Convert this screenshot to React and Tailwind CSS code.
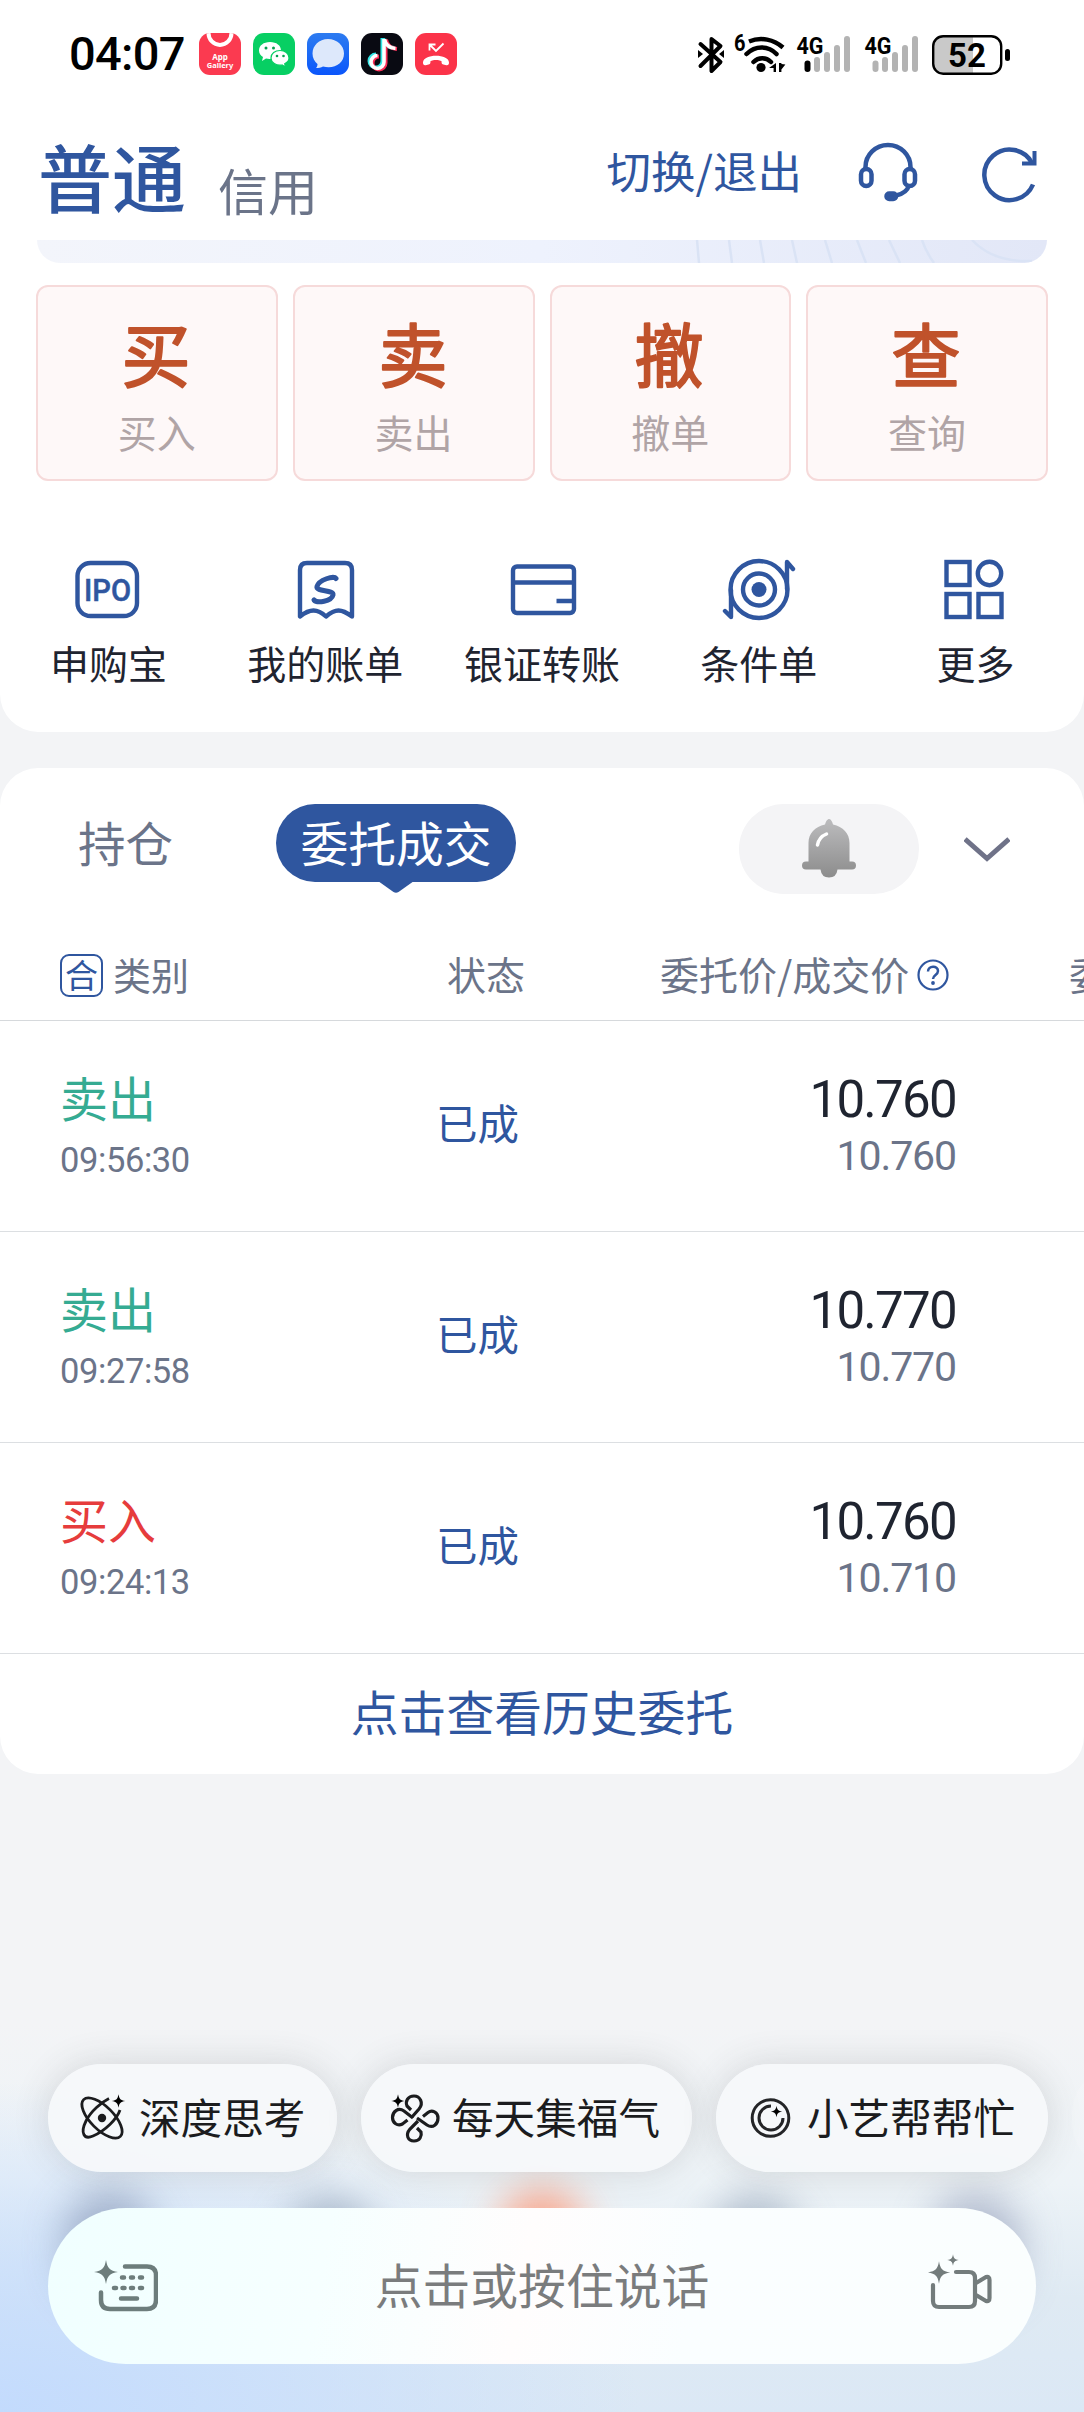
import React from "react";

const BLUE = "#2f569f";

function AppTile({ className, children }) {
  return (
    <div className={"w-[42px] h-[42px] rounded-[11px] overflow-hidden " + className}>
      <svg viewBox="0 0 42 42" className="w-full h-full block">{children}</svg>
    </div>
  );
}

function StatusBar() {
  return (
    <div className="h-[108px] flex items-start justify-between pl-[69px] pr-[73px] pt-[33px]">
      <div className="flex items-start">
        <span className="w-[130px] h-[42px] leading-[42px] text-[47px] font-medium text-black tracking-[-0.7px] font-[Roboto,sans-serif]">04:07</span>
        <div className="flex gap-3">
          <AppTile className="bg-[#fb3a50]">
            <path d="M9.500 0a11.500 12 0 0 0 23 0" fill="none" stroke="#fff" strokeWidth="4" />
            <text x="21" y="26.500" textAnchor="middle" fontSize="8" fontWeight="700" fill="#fff" fontFamily="Noto Sans">App</text>
            <text x="21" y="35" textAnchor="middle" fontSize="7.500" fontWeight="700" fill="#fff" fontFamily="Noto Sans">Gallery</text>
          </AppTile>
          <AppTile className="bg-[#07cf63]">
            <path d="M17 9C10.500 9 6 12.500 6 17.500c0 3 1.500 5 4 6.500l-1 4 4-2.500c6 1.500 15-1 15-8C28 12.500 23.500 9 17 9z" fill="#fff" />
            <path d="M27 17.500c-5 0-9 3-9 7.500s5 8 11 7l3.500 2-.8-3.300c2.500-1.200 4.300-3.200 4.300-5.700 0-4.500-4-7.500-9-7.500z" fill="#fff" stroke="#07cf63" strokeWidth="1.200" />
            <g fill="#07a050"><circle cx="13" cy="15" r="1.500" /><circle cx="20.500" cy="15" r="1.500" /><circle cx="24" cy="23" r="1.300" /><circle cx="30.500" cy="23" r="1.300" /></g>
          </AppTile>
          <AppTile className="bg-linear-to-b from-[#2d7bf0] to-[#0b55fb]">
            <path d="M21 6C12 6 5.500 12.500 5.500 20.500c0 4.500 2 8 5 10.500 0 1.500-.5 3-1.500 4 2.500 0 5-.5 7-1.500 11 3 21-3 21-13C37 12.500 30 6 21 6z" fill="#dde8fb" />
          </AppTile>
          <AppTile className="bg-[#090a12]">
            <g fill="none" strokeWidth="4">
              <path d="M22.500 5.500v23a6.500 6.500 0 1 1-6.500-6.500M23 6c1 6 5 9 11 9.500" stroke="#35e6e6" transform="translate(-1 -.5)" />
              <path d="M23.500 6.500v23a6.500 6.500 0 1 1-6.500-6.500M24 6c1 6 5 9 11 9.500" stroke="#fb2e57" transform="translate(1 .5)" />
              <path d="M23 6v23a6.500 6.500 0 1 1-6.500-6.500M23.500 6c1 6 5 9 11 9.500" stroke="#fff" strokeWidth="3.600" />
            </g>
          </AppTile>
          <AppTile className="bg-[#fb3349]">
            <path d="M14.500 17.500v-6h6M15 12l6 6 7.500-7.500" fill="none" stroke="#fff" strokeWidth="1.800" />
            <path d="M8 29.500c0-9 26-9 26 0 0 2.500-1 3-3.500 2.500-3.500-.5-4-1-4-4-3-1.500-8-1.500-11 0 0 3-.5 3.500-4 4-2.500.5-3.500 0-3.500-2.500z" fill="#fff" />
          </AppTile>
        </div>
      </div>
      <svg viewBox="698 33 314 44" className="w-[314px] h-[44px] overflow-visible" fontFamily="Roboto, sans-serif" fontWeight="700">
        <path d="M701.500 44l20 18-9 9V39l9 7-20 20" fill="none" stroke="#000" strokeWidth="4" strokeLinejoin="round" strokeLinecap="round" />
        <path d="M699 50v8l5-4zM725 50v8l-5-4z" />
        <text x="735" y="51" fontSize="24" textLength="11.500" lengthAdjust="spacingAndGlyphs">6</text>
        <g fill="none" stroke="#000" strokeWidth="4.500">
          <path d="M750 41.500c12-5 25-2 34 6" />
          <path d="M747.500 54c9-9 22-8.500 30 0" strokeLinecap="round" />
          <path d="M754.500 62c5-5 12.500-5 17.500 0" strokeLinecap="round" />
        </g>
        <circle cx="762" cy="67.500" r="4.600" />
        <path d="M777 63v9h-2.400v-4h-4.600zM780 72v-9h2.400v1l4 .5-4 5v2.500z" />
        {[0, 68].map((dx) => (
          <g key={dx} transform={`translate(${dx} 0)`}>
            <text x="797.500" y="54" fontSize="24.500" textLength="27" lengthAdjust="spacingAndGlyphs">4G</text>
            <rect x="805.500" y="60.500" width="6" height="11.500" rx="3" fill={dx ? "#b3b3b3" : "#000"} />
            <g fill="#b3b3b3">
              <rect x="815" y="57" width="6" height="15" rx="3" />
              <rect x="825" y="52" width="6" height="20" rx="3" />
              <rect x="835" y="45" width="6" height="27" rx="3" />
              <rect x="845" y="36" width="6" height="36" rx="3" />
            </g>
          </g>
        ))}
        <path d="M974 37h-30q-10 0-10 10v17q0 10 10 10h30z" fill="#c9c9c9" />
        <rect x="934.200" y="36.200" width="68" height="37.500" rx="10" fill="none" stroke="#000" strokeWidth="2.400" />
        <rect x="1006" y="49" width="5" height="12" rx="2.500" />
        <text x="968" y="67" fontSize="33" textAnchor="middle">52</text>
      </svg>
    </div>
  );
}

function Header() {
  return (
    <div className="h-[132px] flex items-start justify-between pl-[38px] pr-[45px]">
      <div className="flex items-start">
        <span className="w-[180px] text-[74px] leading-[74px] mt-[30px] font-medium text-[#2f569f]">普通</span>
        <span className="text-[50px] leading-[50px] mt-[56px] text-[#6b7489]">信用</span>
      </div>
      <div className="flex items-start">
        <span className="text-[44.500px] leading-[44px] mt-[40px] mr-[56px] text-[#2f569f]">切换/退出</span>
        <svg viewBox="0 0 60 60" className="w-[60px] h-[60px] mt-[34px] mr-[63px]" fill="none" stroke={BLUE} strokeWidth="4.500">
          <path d="M7.500 28v-3a22.500 22 0 0 1 45 0v3" />
          <rect x="3" y="27" width="10.500" height="17" rx="5.250" />
          <rect x="46.500" y="27" width="10.500" height="17" rx="5.250" />
          <path d="M51 43c-1.500 6-6 9-13 10.500" />
          <rect x="28.500" y="51.500" width="9.500" height="5.500" rx="2.750" fill={BLUE} />
        </svg>
        <svg viewBox="0 0 58 58" className="w-[58px] h-[58px] mt-[37px]" fill="none" stroke={BLUE} strokeWidth="4.500">
          <path d="M52 39.500A25.300 25.300 0 1 1 51 18" />
          <path d="M53.500 6v12.500H41" strokeWidth="4" />
        </svg>
      </div>
    </div>
  );
}

function Banner() {
  return (
    <div className="mx-[37px] h-[23px] rounded-b-[28px] overflow-hidden bg-linear-to-r from-[#f3f5fb] via-[#eef2fd] to-[#e2e7f7] flex justify-end">
      <svg viewBox="0 0 400 23" className="w-[400px] h-[23px]" fill="none" stroke="#dae3f5" strokeWidth="2.500">
        <path d="M50 0l2 23M82 0l3 23M113 0l4 23M145 0l5 23M178 0l7 23M210 0l9 23M242 0l11 23M275 0q4 12 12 23M325 0c14 15 35 22 60 21" />
      </svg>
    </div>
  );
}

const trades = [["买", "买入"], ["卖", "卖出"], ["撤", "撤单"], ["查", "查询"]];

function TradeCards() {
  return (
    <div className="mt-[22px] mx-9 grid grid-cols-4 gap-[15px]">
      {trades.map(([big, small]) => (
        <div key={big} className="h-[196px] rounded-xl border-2 border-[#f6dada] bg-[#fef8f8] flex flex-col items-center">
          <svg viewBox="0 0 74 74" className="mt-[33px] w-[74px] h-[74px] overflow-visible">
            <text x="36" y="62" textAnchor="middle" fontSize="69" fill="#c0522b" stroke="#c0522b" strokeWidth="2" strokeLinejoin="round">{big}</text>
          </svg>
          <span className="mt-[18px] text-[39px] leading-[39px] text-[#b0a4a6]">{small}</span>
        </div>
      ))}
    </div>
  );
}

const shortcuts = [
  ["申购宝", (
    <g>
      <rect x="4.500" y="5" width="59.500" height="53" rx="13" />
      <text x="34.500" y="43" textAnchor="middle" fontSize="32" fontWeight="500" fill={BLUE} stroke={BLUE} strokeWidth=".5" fontFamily="Roboto" textLength="47" lengthAdjust="spacingAndGlyphs">IPO</text>
    </g>
  )],
  ["我的账单", (
    <g>
      <path d="M10 58.500V12q0-7 7-7h38q7 0 7 7v46.500q-8-6-13.500-6t-12.500 6q-6.500-6-12.500-6t-13.500 6z" strokeLinejoin="round" />
      <path d="M46 20.500c-2-3-17 1-19 8-1.500 5.500 17 3 16 8.500-1.500 6.500-16 8.500-19 5" strokeWidth="5" strokeLinecap="round" />
    </g>
  )],
  ["银证转账", (
    <g>
      <rect x="6" y="8.500" width="61" height="46.500" rx="4" />
      <path d="M6 24.500h61M49.500 43h17" />
    </g>
  )],
  ["条件单", (
    <g transform="translate(-1 0)">
      <circle cx="36" cy="31.500" r="28.500" /><circle cx="36" cy="31.500" r="16" /><circle cx="36" cy="31.500" r="7.500" fill={BLUE} stroke="none" />
      <path d="M64 31V4l6 7M8 32v27l-6-6" strokeLinecap="round" strokeLinejoin="round" />
    </g>
  )],
  ["更多", (
    <g>
      <rect x="5.500" y="4" width="23" height="23" /><circle cx="48.500" cy="15.500" r="11.700" /><rect x="5.500" y="36" width="23" height="23" /><rect x="37.500" y="36" width="23" height="23" />
    </g>
  )],
];

function Shortcuts() {
  return (
    <div className="mt-[76px] grid grid-cols-5">
      {shortcuts.map(([label, icon]) => (
        <div key={label} className="flex flex-col items-center">
          <svg viewBox="0 0 70 64" className="w-[70px] h-[64px] overflow-visible" fill="none" stroke={BLUE} strokeWidth="4.400"><g transform="translate(0 1)">{icon}</g></svg>
          <span className="mt-[22px] text-[39px] leading-[39px] text-[#1f2430]">{label}</span>
        </div>
      ))}
    </div>
  );
}

function Tabs() {
  return (
    <div className="h-[150px] flex items-start pt-9 pl-[78px]">
      <span className="w-[198px] leading-[76px] text-[47.500px] text-[#6b7489]">持仓</span>
      <div className="relative w-[240px] h-[78px] rounded-full bg-[#2f569f] flex justify-center leading-[76px] text-[47.800px] text-white">
        委托成交
        <svg viewBox="0 0 36 12" className="absolute left-[102px] top-[77px] w-[36px] h-[12px]">
          <path d="M0 0h36L20.500 11q-2.500 1.500-5 0z" fill={BLUE} />
        </svg>
      </div>
      <div className="ml-[223px] w-[180px] h-[90px] rounded-full bg-[#f4f4f6] flex justify-center pt-[15px]">
        <svg viewBox="0 0 54 60" className="w-[54px] h-[60px]">
          <defs><linearGradient id="bell" x1="0" y1="0" x2="0" y2="1"><stop offset="0" stopColor="#bcbcbe" /><stop offset="1" stopColor="#8c8c8c" /></linearGradient></defs>
          <path d="M27 0q2.500 0 4 5.500C41 8 47.500 14 47.500 24v18.500H50a4 4 0 0 1 0 8H35.500q-1 8-8.500 8t-8.500-8H4a4 4 0 0 1 0-8h2.500V24C6.500 14 13 8 23 5.500 24.500 0 27 0 27 0z" fill="url(#bell)" />
          <path d="M15.500 26c1-6 4-9 9-11" fill="none" stroke="#fff" strokeWidth="3.500" strokeLinecap="round" />
        </svg>
      </div>
      <svg viewBox="0 0 46 27" className="ml-[45px] mt-[32px] w-[46px] h-[27px]" fill="none" stroke="#6f7288" strokeWidth="5">
        <path d="M1 3l22 19.500L45 3" />
      </svg>
    </div>
  );
}

function TableHead() {
  return (
    <div className="h-[103px] border-b border-[#d6d9dc] flex items-start pt-[36px] pl-[60px] text-[39px] leading-[39px] text-[#6b7489] whitespace-nowrap overflow-hidden">
      <span className="w-[43px] h-[43px] shrink-0 rounded-[9px] border-2 border-[#2f569f] text-[#2f569f] text-[33px] leading-[37px] flex justify-center">合</span>
      <span className="ml-[10px] w-[334px] shrink-0 text-[38px]">类别</span>
      <span className="w-[213px] shrink-0">状态</span>
      <span className="shrink-0 w-[257px]">委托价/成交价</span>
      <svg viewBox="0 0 32 32" className="w-8 h-8 mt-[5px] shrink-0 mr-[120px]" fill="none" stroke={BLUE} strokeWidth="2.200">
        <circle cx="16" cy="16" r="14.500" />
        <path d="M11 12.500c0-6 10-6.500 10-.5 0 4-5 4-5 8" strokeWidth="2.500" />
        <circle cx="16" cy="24" r="1.900" fill={BLUE} stroke="none" />
      </svg>
      <span className="shrink-0">委托量</span>
    </div>
  );
}

const orders = [
  ["卖出", "09:56:30", "10.760", "10.760", "text-[#35ab92]"],
  ["卖出", "09:27:58", "10.770", "10.770", "text-[#35ab92]"],
  ["买入", "09:24:13", "10.760", "10.710", "text-[#e63c3c]"],
];

function OrderRow({ order }) {
  const [side, time, price, deal, tone] = order;
  return (
    <div className="h-[211px] border-b border-[#dcdfe2] flex items-start pl-[60px] pr-[128px]">
      <div className="w-[376px] flex flex-col pt-[51px]">
        <span className={"text-[48px] leading-[48px] " + tone}>{side}</span>
        <span className="mt-[22px] text-[34.500px] leading-[36px] tracking-[-0.4px] text-[#6b7489] font-[Roboto,sans-serif]">{time}</span>
      </div>
      <span className="mt-[81px] text-[41.500px] leading-[41px] text-[#2f569f]">已成</span>
      <div className="ml-auto flex flex-col items-end pt-[53px] font-[Roboto,sans-serif]">
        <span className="text-[51px] leading-[52px] tracking-[-1.7px] text-[#1f2430]">{price}</span>
        <span className="mt-[9px] text-[41px] leading-[42px] tracking-[-1.100px] text-[#6b7489]">{deal}</span>
      </div>
    </div>
  );
}

const STAR = "M0-10C1.200-3 3-1.200 10 0 3 1.200 1.200 3 0 10-1.200 3-3 1.200-10 0-3-1.200-1.200-3 0-10z";

const chips = [
  ["深度思考", "w-[289px] pl-[33px]", "w-[58px]", (
    <g fill="none" stroke="#1b1c1e" strokeWidth="2.800">
      <ellipse cx="21" cy="24" rx="26" ry="11.500" transform="rotate(45 21 24)" />
      <path d="M28 4.500C21 8 10 17 5 27c-6 12-2 19 7 15C24 37 36 25 39 16" />
      <circle cx="21" cy="24" r="4.200" fill="#1b1c1e" stroke="none" />
      <path d={STAR} transform="translate(37.500 7) scale(.68)" fill="#000" stroke="none" />
    </g>
  )],
  ["每天集福气", "w-[331px] pl-[30px]", "w-[61px]", (
    <g fill="none" stroke="#1b1c1e" strokeWidth="3.200">
      <path d="M22 24l-9-7C7 13 1.500 18 1.500 23.500s5 9 10 6.500l5-4" />
      <path d="M21 23l7-8c5-6 1-13-5-13s-9 5-7 10l4 4" />
      <path d="M26 24l10 7c6 4 11-1 11-7s-6-8.500-10-5.500l-5 4" />
      <path d="M27 27l-8 8c-5 6-2 12 4 12s8-5 7-9l-4-4" />
      <path d={STAR} transform="translate(7 7) scale(.68)" fill="#000" stroke="none" />
    </g>
  )],
  ["小艺帮帮忙", "w-[332px] pl-[33px]", "w-[58px]", (
    <g fill="none" stroke="#242527" strokeWidth="3">
      <circle cx="21.500" cy="24" r="18.300" />
      <path d="M22 12a12 12 0 1 0 12 12" />
      <path d={STAR} transform="translate(27.500 17.500) scale(.58)" fill="#000" stroke="none" />
    </g>
  )],
];

function Assistant() {
  return (
    <div className="relative mt-[66px] h-[572px] overflow-hidden bg-[linear-gradient(to_bottom,#f3f4f6_0,#f3f4f6_32%,#edf3f7_60%,#dfeaf3_80%,#dbe8f5_100%)]">
      <div className="absolute inset-0 bg-[radial-gradient(ellipse_640px_330px_at_0%_100%,#c3dbfd_0%,#c8defcbb_45%,transparent_100%)]" />
      <div className="absolute left-[65px] top-[352px] w-[90px] h-[110px] rounded-full bg-[#8f9fbc] blur-[20px] opacity-80" />
      <div className="absolute left-[285px] top-[358px] w-[90px] h-[90px] rounded-full bg-[#8f9fb4] blur-[20px] opacity-75" />
      <div className="absolute left-[500px] top-[350px] w-[84px] h-[84px] rounded-full bg-[#ff8a64] blur-[20px] opacity-75" />
      <div className="absolute left-[710px] top-[358px] w-[90px] h-[90px] rounded-full bg-[#8f9fb4] blur-[20px] opacity-75" />
      <div className="absolute left-[930px] top-[355px] w-[90px] h-[110px] rounded-full bg-[#98a2bc] blur-[20px] opacity-75" />
      <div className="relative pt-[224px] pl-12">
        <div className="flex gap-6">
          {chips.map(([label, box, slot, icon]) => (
            <div key={label} className={"h-[108px] shrink-0 rounded-full bg-[#f6f8faf2] shadow-[0_0_36px_rgba(60,60,60,0.16)] flex items-center " + box}>
              <span className={"shrink-0 " + slot}>
                <svg viewBox="0 0 48 48" className="w-12 h-12 overflow-visible">{icon}</svg>
              </span>
              <span className="mb-1 text-[41.600px] leading-[42px] text-[#1b1c1e] whitespace-nowrap">{label}</span>
            </div>
          ))}
          <div className="w-[100px] h-[108px] shrink-0 rounded-full bg-white/15" />
        </div>
        <div className="mt-9 w-[988px] h-[156px] rounded-full bg-[linear-gradient(100deg,#f0ffff_0%,#f6ffff_28%,#fffdfd_48%,#fafeff_65%,#fafefe_100%)] flex items-center justify-between pl-[46px] pr-[44px]">
          <svg viewBox="0 0 64 52" className="w-16 h-[52px]" fill="none" stroke="#6d7d7c" strokeWidth="4.500" strokeLinecap="round">
            <path d="M31 6.500h22q9 0 9 9V40q0 9-9 9H16q-9 0-9-9v-7.500" />
            <path d="M28 17.500h2M37 17.500h2M46 17.500h2M20 28h2M28.500 28h2M37 28h2M46 28h2M27 38.500h16" />
            <path d={STAR} transform="translate(12 12) scale(1.200)" fill="#6d7d7c" stroke="none" />
          </svg>
          <span className="mb-1 mr-0.5 text-[47.800px] leading-[48px] text-[#7a7c7d]">点击或按住说话</span>
          <svg viewBox="0 0 64 56" className="w-16 h-[56px] -mt-2" fill="none" stroke="#737c7c" strokeWidth="4.200" strokeLinecap="round" strokeLinejoin="round">
            <path d="M28 18h13q6 0 6 6v23q0 6-6 6H11q-6 0-6-6V31M48 29l10-6q3.500-1 3.500 3v18q0 4-3.500 3l-10-6" />
            <path d={STAR} transform="translate(11 18.500) scale(1.120)" fill="#737c7c" stroke="none" />
            <path d={STAR} transform="translate(25 6) scale(.58)" fill="#737c7c" stroke="none" />
          </svg>
        </div>
      </div>
    </div>
  );
}

export default function App() {
  return (
    <div className="w-[1084px] h-[2412px] overflow-hidden bg-[#f3f4f6] font-['Noto_Sans_CJK_SC',sans-serif]">
      <div className="h-[732px] bg-white rounded-b-[38px]">
        <StatusBar />
        <Header />
        <Banner />
        <TradeCards />
        <Shortcuts />
      </div>
      <div className="mt-9 h-[1006px] bg-white rounded-[38px]">
        <Tabs />
        <TableHead />
        {orders.map((o) => <OrderRow key={o[1]} order={o} />)}
        <div className="pt-[31px] text-center text-[47.800px] leading-[52px] text-[#2f569f]">点击查看历史委托</div>
      </div>
      <Assistant />
    </div>
  );
}
